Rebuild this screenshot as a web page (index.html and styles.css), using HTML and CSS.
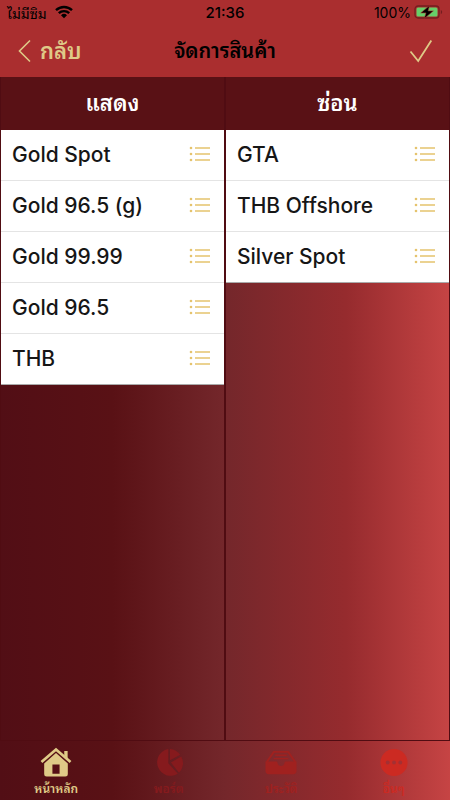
FILE: index.html
```html
<!DOCTYPE html>
<html lang="th">
<head>
    <meta charset="utf-8">
    <meta name="viewport" content="width=device-width, initial-scale=1">
    <title>จัดการสินค้า</title>
    <link rel="stylesheet" href="styles.css">
</head>
<body>
    <!-- Shared list icon -->
    <svg class="symbols" aria-hidden="true">
        <symbol id="list-icon" viewBox="0 0 22 16">
            <path d="M6 2h15M6 8h15M6 14h15" stroke="currentColor" stroke-width="1.3"/>
            <circle cx="2" cy="2" r="1.3" fill="currentColor"/>
            <circle cx="2" cy="8" r="1.3" fill="currentColor"/>
            <circle cx="2" cy="14" r="1.3" fill="currentColor"/>
        </symbol>
    </svg>

    <header class="top">
        <div class="status-bar">
            <div class="carrier">
                <span>ไม่มีซิม</span>
                <svg width="18" height="14" viewBox="0 0 18 14">
                    <path d="M1 5.2a11.5 11.5 0 0 1 16 0M3.8 8.2a7.5 7.5 0 0 1 10.4 0" fill="none" stroke="#000" stroke-width="2.4"/>
                    <path d="M9 13.2L6 10.2a4.3 4.3 0 0 1 6 0z"/>
                </svg>
            </div>
            <span class="clock">21:36</span>
            <div class="battery">
                <span>100%</span>
                <svg width="29" height="14" viewBox="0 0 29 14">
                    <rect x="1" y="1" width="24" height="12" rx="3" fill="none" stroke="#741e20" stroke-width="1.3"/>
                    <rect x="2.5" y="2.5" width="21" height="9" rx="1.5" fill="#66cf69"/>
                    <path d="M26.8 5v4.2q1.4-.6 1.4-2.1T26.8 5z" fill="#741e20"/>
                    <path d="M15.5.6L6.8 7.9H12l-1.7 5.6 9-7.6h-5.2z" stroke="#aa2e2f" stroke-width=".6"/>
                </svg>
            </div>
        </div>
        <nav class="nav-bar">
            <button type="button" class="back">
                <svg width="14" height="24" viewBox="0 0 14 24">
                    <path d="M13 1.5L2.5 12L13 22.5" fill="none" stroke="currentColor" stroke-width="1.6"/>
                </svg>
                <span>กลับ</span>
            </button>
            <h1>จัดการสินค้า</h1>
            <button type="button" class="done" aria-label="Done">
                <svg width="24" height="24" viewBox="0 0 24 24">
                    <path d="M1.5 12.5l7.7 9.5L22.3 1.5" fill="none" stroke="currentColor" stroke-width="1.8"/>
                </svg>
            </button>
        </nav>
    </header>

    <main class="columns">
        <section class="column">
            <h2>แสดง</h2>
            <ul>
                <li><span>Gold Spot</span><svg class="handle"><use href="#list-icon"/></svg></li>
                <li><span>Gold 96.5 (g)</span><svg class="handle"><use href="#list-icon"/></svg></li>
                <li><span>Gold 99.99</span><svg class="handle"><use href="#list-icon"/></svg></li>
                <li><span>Gold 96.5</span><svg class="handle"><use href="#list-icon"/></svg></li>
                <li><span>THB</span><svg class="handle"><use href="#list-icon"/></svg></li>
            </ul>
        </section>
        <section class="column">
            <h2>ซ่อน</h2>
            <ul>
                <li><span>GTA</span><svg class="handle"><use href="#list-icon"/></svg></li>
                <li><span>THB Offshore</span><svg class="handle"><use href="#list-icon"/></svg></li>
                <li><span>Silver Spot</span><svg class="handle"><use href="#list-icon"/></svg></li>
            </ul>
        </section>
    </main>

    <nav class="tab-bar">
        <a href="#home" class="tab home">
            <svg width="34" height="32" viewBox="0 0 34 32">
                <path d="M2 15.5L17 2.5l15 13" fill="none" stroke="currentColor" stroke-width="2.8"/>
                <path d="M25.5 4H29v8l-3.5-3z" fill="currentColor"/>
                <path d="M17 6.3L4.8 17v11q0 2.5 2.5 2.5h19.4q2.5 0 2.5-2.5V17zM13.3 18h7.4v9.5h-7.4z" fill="currentColor" fill-rule="evenodd"/>
            </svg>
            <span>หน้าหลัก</span>
        </a>
        <a href="#portfolio" class="tab portfolio">
            <svg width="34" height="32" viewBox="0 0 34 32">
                <path d="M16.3 2v14.7l9.8 11A14 14 0 1 1 16.3 2z" fill="currentColor"/>
                <path d="M18 2a14 14 0 0 1 10.6 6L18 13.8z" fill="currentColor"/>
                <path d="M29.6 9.7a14 14 0 0 1-2.2 16.8L19 16z" fill="currentColor"/>
            </svg>
            <span>พอร์ต</span>
        </a>
        <a href="#history" class="tab history">
            <svg width="34" height="32" viewBox="0 0 34 32">
                <path d="M2.3 15.5L9.5 5h15l7.2 10.5" fill="none" stroke="currentColor" stroke-width="2"/>
                <path d="M11 8.5h12M9.5 12h15" stroke="currentColor" stroke-width="1.5"/>
                <path d="M1 15h11q1.2 0 1.4 1.5.6 3 3.6 3t3.6-3Q20.8 15 22 15h11v9.5q0 3.5-3.5 3.5h-25Q1 28 1 24.5z" fill="currentColor"/>
            </svg>
            <span>ประวัติ</span>
        </a>
        <a href="#more" class="tab more">
            <svg width="34" height="32" viewBox="0 0 34 32">
                <circle cx="17" cy="16" r="14" fill="currentColor"/>
                <g fill="#a33033">
                    <circle cx="10.5" cy="16" r="2"/>
                    <circle cx="17" cy="16" r="2"/>
                    <circle cx="23.5" cy="16" r="2"/>
                </g>
            </svg>
            <span>อื่นๆ</span>
        </a>
    </nav>
</body>
</html>
```
FILE: styles.css
```css
* {
    box-sizing: border-box;
}

body {
    display: flex;
    flex-direction: column;
    min-height: 100vh;
    margin: 0;
    font-family: Inter, "Noto Sans Thai Looped", Loma, "Noto Sans Thai", sans-serif;
    background: linear-gradient(to right, #520e15 0%, #591115 25%, #74272b 50%, #962b2e 77%, #c64444 100%);
}

.symbols {
    display: none;
}

button {
    padding: 0;
    border: none;
    background: none;
    color: #dfca87;
    font-family: inherit;
    cursor: pointer;
}

/* Status bar and title */
.top {
    background-color: #aa2e2f;
}

.status-bar,
.nav-bar {
    display: grid;
    grid-template-columns: 1fr auto 1fr;
    align-items: center;
}

.status-bar {
    height: 24px;
    padding: 0 7px;
    font-size: 14px;
}

.carrier,
.battery {
    display: flex;
    align-items: center;
    gap: 8px;
}

.battery {
    justify-content: flex-end;
    gap: 3px;
}

.clock {
    font-size: 15px;
    font-weight: 500;
}

.nav-bar {
    height: 53px;
    padding: 0 17px;
}

.nav-bar h1 {
    margin: 0;
    padding-bottom: 4px;
    font-size: 20px;
    font-weight: 600;
}

.back {
    display: flex;
    align-items: center;
    gap: 9px;
    font-size: 22px;
    font-weight: 600;
}

.back span {
    padding-bottom: 4px;
}

.done {
    display: flex;
    justify-self: end;
}

/* Product columns */
.columns {
    display: flex;
    flex: 1;
}

.column {
    flex: 1;
    border: 1px solid #500c12;
    border-top: none;
}

.column h2 {
    height: 53px;
    margin: 0;
    background-color: #591115;
    color: #fff;
    font-size: 22px;
    font-weight: 600;
    line-height: 53px;
    text-align: center;
}

.column ul {
    margin: 0;
    padding: 0;
    list-style: none;
}

.column li {
    display: flex;
    align-items: center;
    justify-content: space-between;
    height: 51px;
    padding: 0 13px 2px 11px;
    border-bottom: 1px solid #e4e4e4;
    background-color: #fff;
    color: #161616;
    font-size: 21px;
    font-weight: 500;
}

.column li:last-child {
    border-bottom-color: #aaa;
}

.handle {
    width: 22px;
    height: 16px;
    color: #e5c36d;
}

/* Bottom tabs */
.tab-bar {
    display: flex;
    height: 59px;
}

.tab {
    display: flex;
    flex: 1;
    flex-direction: column;
    align-items: center;
    padding-top: 6px;
    font-size: 12px;
    font-weight: 600;
    line-height: 22px;
    text-decoration: none;
}

.home {
    color: #dfca87;
}

.portfolio {
    color: #861a1d;
}

.history {
    color: #a0211f;
}

.more {
    color: #cc2a22;
}
```
